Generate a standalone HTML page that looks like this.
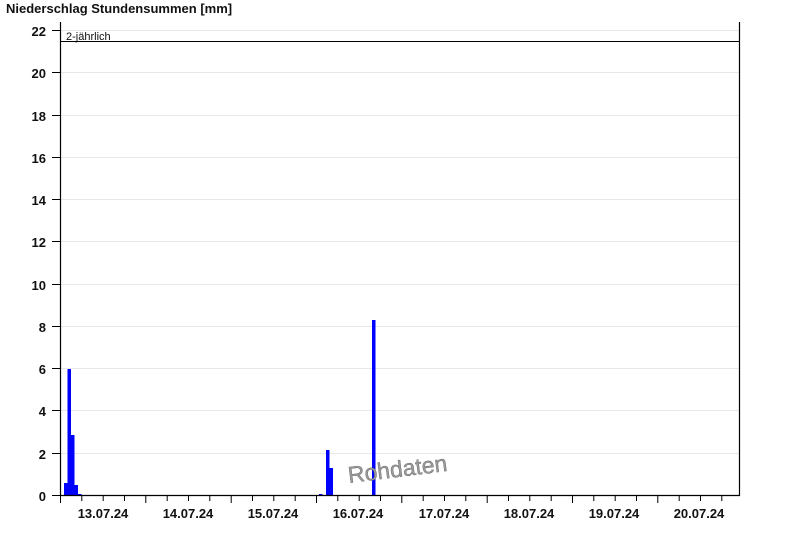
<!DOCTYPE html>
<html><head><meta charset="utf-8"><style>
html,body{margin:0;padding:0;background:#fff;}
svg{display:block;font-family:"Liberation Sans",Arial,sans-serif;}
</style></head><body>
<svg width="800" height="550" viewBox="0 0 800 550" xmlns="http://www.w3.org/2000/svg">
<rect width="800" height="550" fill="#fff"/>
<text x="6" y="13" font-size="13" font-weight="bold" fill="#111">Niederschlag Stundensummen [mm]</text>
<g stroke="#e8e8e8" stroke-width="1">
<line x1="61" x2="739" y1="30.5" y2="30.5"/>
<line x1="61" x2="739" y1="72.5" y2="72.5"/>
<line x1="61" x2="739" y1="115.5" y2="115.5"/>
<line x1="61" x2="739" y1="157.5" y2="157.5"/>
<line x1="61" x2="739" y1="199.5" y2="199.5"/>
<line x1="61" x2="739" y1="241.5" y2="241.5"/>
<line x1="61" x2="739" y1="284.5" y2="284.5"/>
<line x1="61" x2="739" y1="326.5" y2="326.5"/>
<line x1="61" x2="739" y1="368.5" y2="368.5"/>
<line x1="61" x2="739" y1="410.5" y2="410.5"/>
<line x1="61" x2="739" y1="453.5" y2="453.5"/>
</g>
<line x1="61" x2="740" y1="41.5" y2="41.5" stroke="#000"/>
<text x="66" y="40" font-size="11" fill="#111">2-jährlich</text>
<g fill="#0000ff">
<rect x="64" y="483" width="3.5" height="12"/>
<rect x="67.5" y="369" width="3.5" height="126"/>
<rect x="71" y="435" width="3.5" height="60"/>
<rect x="74.5" y="485" width="3.5" height="10"/>
<rect x="78" y="494" width="3.5" height="1"/>
<rect x="319" y="494" width="3.5" height="1"/>
<rect x="326" y="450" width="3.5" height="45"/>
<rect x="329.5" y="468" width="3.5" height="27"/>
<rect x="372" y="320" width="3.5" height="175"/>
</g>
<text x="349" y="483" font-size="23" fill="#9a9a9a" stroke="#666" stroke-width="0.4" transform="rotate(-7 349 483)">Rohdaten</text>
<g stroke="#000" stroke-width="1.2">
<line x1="60.5" y1="22" x2="60.5" y2="496"/>
<line x1="739.5" y1="22" x2="739.5" y2="496"/>
<line x1="60" y1="495.5" x2="740" y2="495.5"/>
</g>
<g stroke="#000" stroke-width="1">
<line x1="52" x2="60" y1="30.5" y2="30.5"/>
<line x1="52" x2="60" y1="72.5" y2="72.5"/>
<line x1="52" x2="60" y1="115.5" y2="115.5"/>
<line x1="52" x2="60" y1="157.5" y2="157.5"/>
<line x1="52" x2="60" y1="199.5" y2="199.5"/>
<line x1="52" x2="60" y1="241.5" y2="241.5"/>
<line x1="52" x2="60" y1="284.5" y2="284.5"/>
<line x1="52" x2="60" y1="326.5" y2="326.5"/>
<line x1="52" x2="60" y1="368.5" y2="368.5"/>
<line x1="52" x2="60" y1="410.5" y2="410.5"/>
<line x1="52" x2="60" y1="453.5" y2="453.5"/>
<line x1="52" x2="60" y1="495.5" y2="495.5"/>
</g>
<g font-size="13" font-weight="bold" fill="#111" text-anchor="end">
<text x="46" y="36">22</text>
<text x="46" y="78">20</text>
<text x="46" y="121">18</text>
<text x="46" y="163">16</text>
<text x="46" y="205">14</text>
<text x="46" y="247">12</text>
<text x="46" y="290">10</text>
<text x="46" y="332">8</text>
<text x="46" y="374">6</text>
<text x="46" y="416">4</text>
<text x="46" y="459">2</text>
<text x="46" y="501">0</text>
</g>
<g font-size="13" font-weight="bold" fill="#111" text-anchor="middle">
<text x="103" y="518">13.07.24</text>
<text x="188" y="518">14.07.24</text>
<text x="273" y="518">15.07.24</text>
<text x="358" y="518">16.07.24</text>
<text x="444" y="518">17.07.24</text>
<text x="529" y="518">18.07.24</text>
<text x="614" y="518">19.07.24</text>
<text x="699" y="518">20.07.24</text>
</g>
<g stroke="#000" stroke-width="1">
<path d="M60.5 496v7M81.8 496v5M103.2 496v5M124.5 496v5M145.8 496v7M167.2 496v5M188.5 496v5M209.8 496v5M231.2 496v7M252.5 496v5M273.8 496v5M295.2 496v5M316.5 496v7M337.8 496v5M359.2 496v5M380.5 496v5M401.8 496v7M423.2 496v5M444.5 496v5M465.8 496v5M487.2 496v7M508.5 496v5M529.8 496v5M551.2 496v5M572.5 496v7M593.8 496v5M615.2 496v5M636.5 496v5M657.8 496v7M679.2 496v5M700.5 496v5M721.8 496v5"/>
</g>
</svg>
</body></html>
